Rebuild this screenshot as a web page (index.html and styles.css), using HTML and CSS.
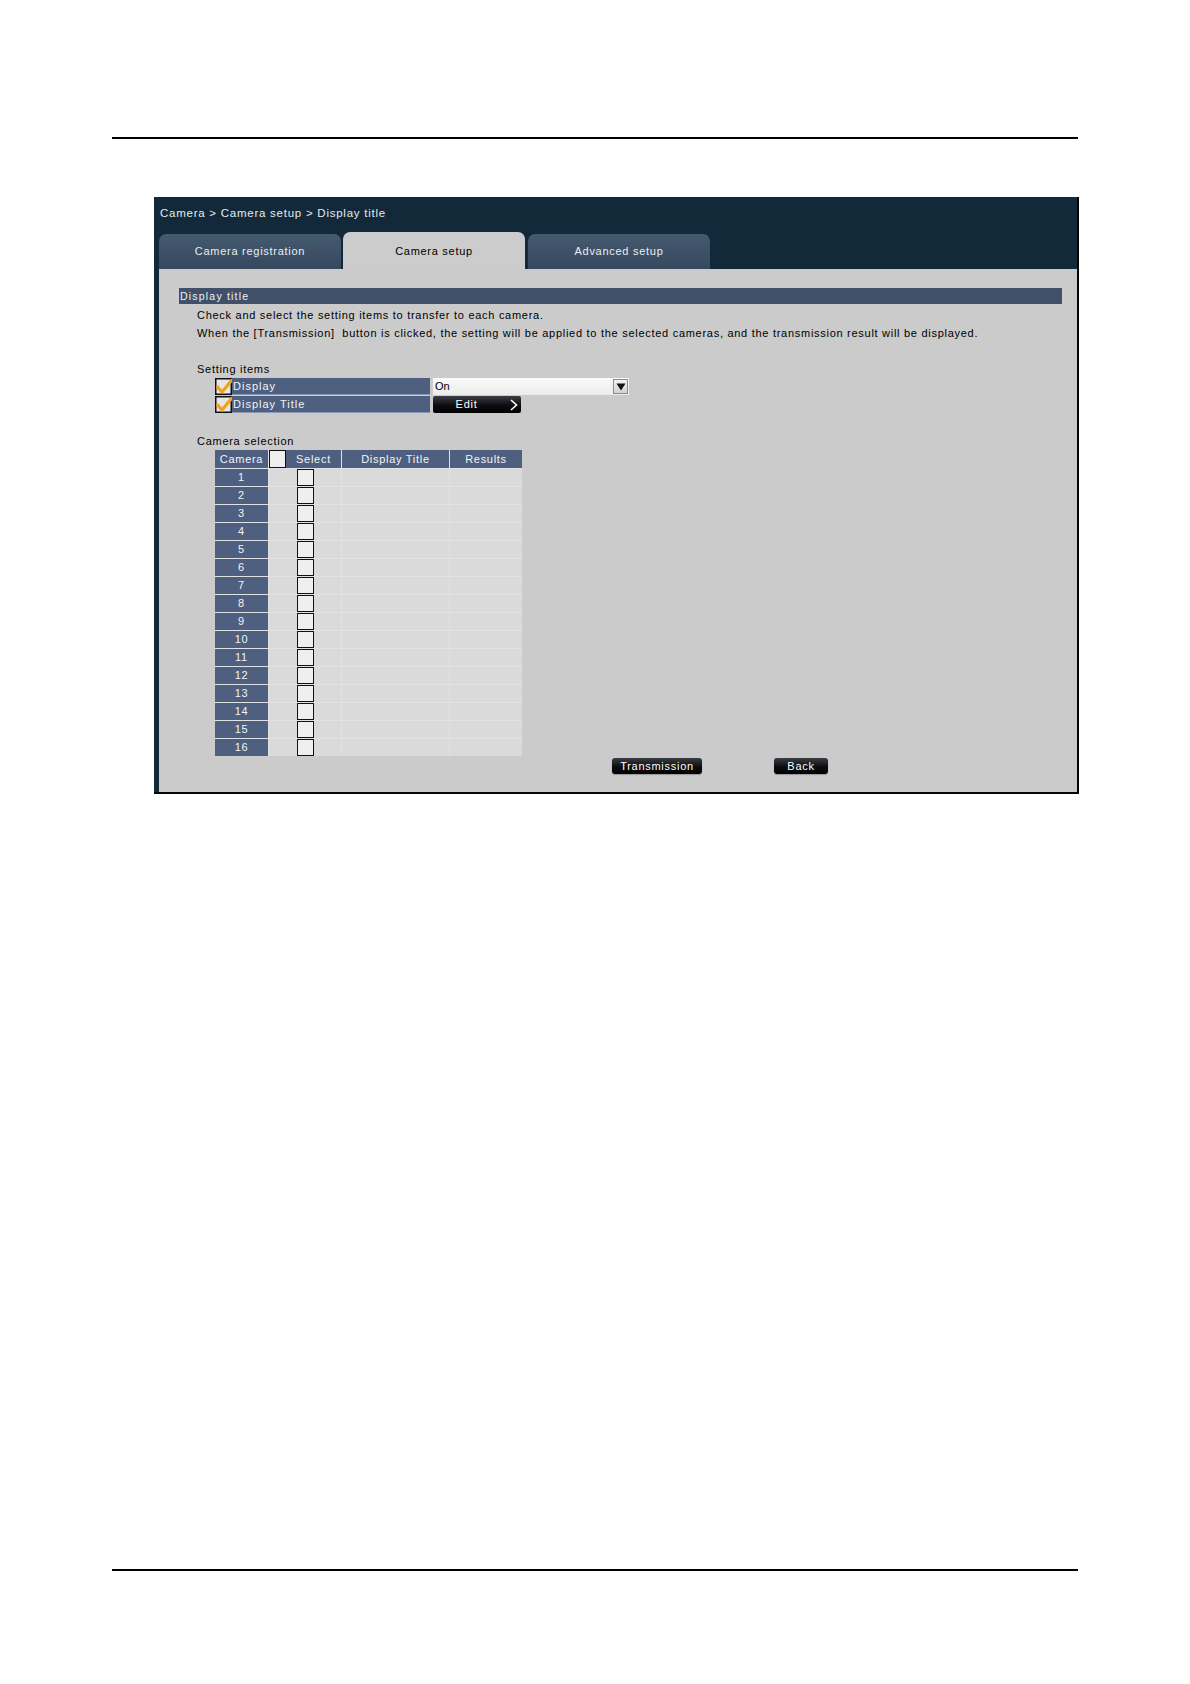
FILE: index.html
```html
<!DOCTYPE html>
<html lang="en">
<head>
<meta charset="utf-8">
<title>Display title</title>
<link rel="stylesheet" href="styles.css">
</head>
<body>
<div class="page">
  <div class="rule"></div>

  <div class="panel">
    <div class="crumb">Camera &gt; Camera setup &gt; Display title</div>
    <div class="tabs">
      <div class="tab">Camera registration</div>
      <div class="tab tab-active">Camera setup</div>
      <div class="tab tab-last">Advanced setup</div>
    </div>

    <div class="content">
      <div class="bar">Display title</div>
      <div class="desc">
        <div>Check and select the setting items to transfer to each camera.</div>
        <div>When the [Transmission]&nbsp; button is clicked, the setting will be applied to the selected cameras, and the transmission result will be displayed.</div>
      </div>

      <div class="subhead">Setting items</div>
      <div class="settings">
        <div class="srow">
          <svg class="tick" viewBox="0 0 17 17" width="17" height="17">
            <rect x="0.75" y="0.75" width="15.5" height="15.5" fill="#e6e6e6" stroke="#111" stroke-width="1.5"/>
            <path d="M2.5 9 L7 14 L16.5 2.5" fill="none" stroke="#efa21c" stroke-width="3.2" stroke-linecap="round" stroke-linejoin="round"/>
          </svg>
          <div class="slabel">Display</div>
          <div class="select">
            <span class="select-val">On</span>
            <span class="select-arrow">
              <svg viewBox="0 0 10 8" width="10" height="8"><path d="M0.5 0.5 H9.5 L5 7.5 Z" fill="#111"/></svg>
            </span>
          </div>
        </div>
        <div class="srow">
          <svg class="tick" viewBox="0 0 17 17" width="17" height="17">
            <rect x="0.75" y="0.75" width="15.5" height="15.5" fill="#e6e6e6" stroke="#111" stroke-width="1.5"/>
            <path d="M2.5 9 L7 14 L16.5 2.5" fill="none" stroke="#efa21c" stroke-width="3.2" stroke-linecap="round" stroke-linejoin="round"/>
          </svg>
          <div class="slabel">Display Title</div>
          <div class="editbtn">
            <span class="edit-text">Edit</span>
            <svg class="chev" viewBox="0 0 8 12" width="8" height="12"><path d="M1 1 L6.5 6 L1 11" fill="none" stroke="#fff" stroke-width="1.6"/></svg>
          </div>
        </div>
      </div>

      <div class="subhead subhead-2">Camera selection</div>
      <div class="cams">
        <div class="hcell">Camera</div>
        <div class="hsel"><span class="hbox"></span><span class="hsel-txt">Select</span></div>
        <div class="hcell">Display Title</div>
        <div class="hcell">Results</div>

        <div class="num">1</div><div class="cell sel"><span class="box"></span></div><div class="cell"></div><div class="cell"></div>
        <div class="num">2</div><div class="cell sel"><span class="box"></span></div><div class="cell"></div><div class="cell"></div>
        <div class="num">3</div><div class="cell sel"><span class="box"></span></div><div class="cell"></div><div class="cell"></div>
        <div class="num">4</div><div class="cell sel"><span class="box"></span></div><div class="cell"></div><div class="cell"></div>
        <div class="num">5</div><div class="cell sel"><span class="box"></span></div><div class="cell"></div><div class="cell"></div>
        <div class="num">6</div><div class="cell sel"><span class="box"></span></div><div class="cell"></div><div class="cell"></div>
        <div class="num">7</div><div class="cell sel"><span class="box"></span></div><div class="cell"></div><div class="cell"></div>
        <div class="num">8</div><div class="cell sel"><span class="box"></span></div><div class="cell"></div><div class="cell"></div>
        <div class="num">9</div><div class="cell sel"><span class="box"></span></div><div class="cell"></div><div class="cell"></div>
        <div class="num">10</div><div class="cell sel"><span class="box"></span></div><div class="cell"></div><div class="cell"></div>
        <div class="num">11</div><div class="cell sel"><span class="box"></span></div><div class="cell"></div><div class="cell"></div>
        <div class="num">12</div><div class="cell sel"><span class="box"></span></div><div class="cell"></div><div class="cell"></div>
        <div class="num">13</div><div class="cell sel"><span class="box"></span></div><div class="cell"></div><div class="cell"></div>
        <div class="num">14</div><div class="cell sel"><span class="box"></span></div><div class="cell"></div><div class="cell"></div>
        <div class="num">15</div><div class="cell sel"><span class="box"></span></div><div class="cell"></div><div class="cell"></div>
        <div class="num">16</div><div class="cell sel"><span class="box"></span></div><div class="cell"></div><div class="cell"></div>
      </div>

      <div class="actions">
        <div class="btn btn-trans">Transmission</div>
        <div class="btn btn-back">Back</div>
      </div>
    </div>
  </div>

  <div class="rule rule-bottom"></div>
</div>
</body>
</html>
```

FILE: styles.css
```css
* { box-sizing: border-box; }

html, body {
  margin: 0;
  padding: 0;
  background: #ffffff;
}

body {
  font-family: "Liberation Sans", Arial, sans-serif;
  font-size: 11px;
  letter-spacing: 0.72px;
  color: #000;
}

.page {
  width: 1190px;
  height: 1684px;
  padding-top: 137px;
}

.rule {
  height: 2px;
  margin: 0 112px;
  background: #000;
}

.rule-bottom {
  margin-top: 775px;
}

.panel {
  margin: 58px 0 0 154px;
  width: 925px;
  height: 597px;
  background: #12293a;
  border-right: 2px solid #050505;
  border-bottom: 2px solid #050505;
}

.crumb {
  height: 35px;
  padding: 8px 0 0 6px;
  line-height: 16px;
  font-size: 11.5px;
  letter-spacing: 0.75px;
  color: #e6ebef;
}

.tabs {
  height: 37px;
  display: flex;
  align-items: flex-end;
  padding-left: 5px;
}

.tab {
  width: 182px;
  height: 35px;
  border-radius: 7px 7px 0 0;
  background: linear-gradient(#45596f, #36495e);
  color: #e9eef2;
  text-align: center;
  line-height: 35px;
}

.tab + .tab { margin-left: 2px; }
.tab-last { margin-left: 3px !important; }

.tab-active {
  height: 37px;
  line-height: 39px;
  background: #cccccc;
  color: #000;
}

.content {
  margin-left: 5px;
  height: 523px;
  background: #cbcbcb;
  padding: 19px 15px 18px 20px;
}

.bar {
  height: 16px;
  line-height: 16px;
  background: #405068;
  color: #eef1f5;
  font-size: 10.5px;
  letter-spacing: 1.2px;
  padding-left: 1px;
}

.desc {
  margin: 2px 0 0 18px;
  line-height: 18px;
}

.subhead {
  margin: 18px 0 0 18px;
  line-height: 18px;
}

.subhead-2 {
  margin-top: 20px;
  line-height: 17px;
}

.settings {
  margin-left: 36px;
  display: flex;
  flex-direction: column;
  gap: 1px;
}

.srow {
  display: flex;
  height: 17px;
}

.tick {
  display: block;
  flex: none;
  overflow: visible;
}

.slabel {
  width: 198px;
  height: 17px;
  line-height: 17px;
  background: #4e5f7f;
  color: #f2f4f8;
  padding-left: 1px;
  border-bottom: 1px solid #8a98b2;
  letter-spacing: 1px;
}

.select {
  margin-left: 3px;
  width: 196px;
  height: 17px;
  display: flex;
  align-items: center;
  background: linear-gradient(#fafafa, #ececec);
}

.select-val {
  flex: 1;
  padding-left: 2px;
  line-height: 17px;
  letter-spacing: 0;
}

.select-arrow {
  width: 15px;
  height: 15px;
  margin-right: 1px;
  display: flex;
  align-items: center;
  justify-content: center;
  background: linear-gradient(#f4f4f4, #d2d2d2);
  border: 1px solid #8c8c8c;
}

.select-arrow svg { display: block; }

.editbtn {
  margin-left: 3px;
  width: 88px;
  height: 17px;
  border-radius: 2px;
  background: linear-gradient(#3a3d42, #0c0d10 55%, #000);
  color: #fff;
  display: flex;
  align-items: center;
}

.edit-text {
  width: 67px;
  text-align: center;
  line-height: 17px;
}

.chev { display: block; margin-left: 10px; }

.cams {
  margin-left: 36px;
  display: grid;
  grid-template-columns: 53px 72px 107px 72px;
  grid-template-rows: 18px;
  grid-auto-rows: 17px;
  column-gap: 1px;
  row-gap: 1px;
  width: 307px;
  background: #e0e2e6;
}

.hcell {
  background: #4e5f7f;
  color: #f2f4f8;
  text-align: center;
  line-height: 18px;
}

.hsel {
  display: flex;
  background: #dadada;
}

.hbox {
  width: 17px;
  height: 18px;
  border: 1.5px solid #111;
  background: #efefef;
  flex: none;
}

.hsel-txt {
  flex: 1;
  background: #4e5f7f;
  color: #f2f4f8;
  text-align: center;
  line-height: 18px;
}

.num {
  background: #4e5f7f;
  color: #f2f4f8;
  text-align: center;
  line-height: 17px;
}

.cell {
  background: #dadada;
}

.sel {
  display: flex;
  justify-content: center;
}

.box {
  width: 17px;
  height: 17px;
  border: 1.5px solid #111;
  background: #efefef;
}

.actions {
  margin-top: 2px;
  display: flex;
  padding-left: 433px;
}

.btn {
  height: 16px;
  line-height: 16px;
  border-radius: 3px;
  background: linear-gradient(#3a3d42, #0c0d10 55%, #000);
  color: #fff;
  text-align: center;
  box-shadow: 0 1px 1px rgba(0,0,0,0.25);
}

.btn-trans { width: 90px; }
.btn-back { width: 54px; margin-left: 72px; }
```
